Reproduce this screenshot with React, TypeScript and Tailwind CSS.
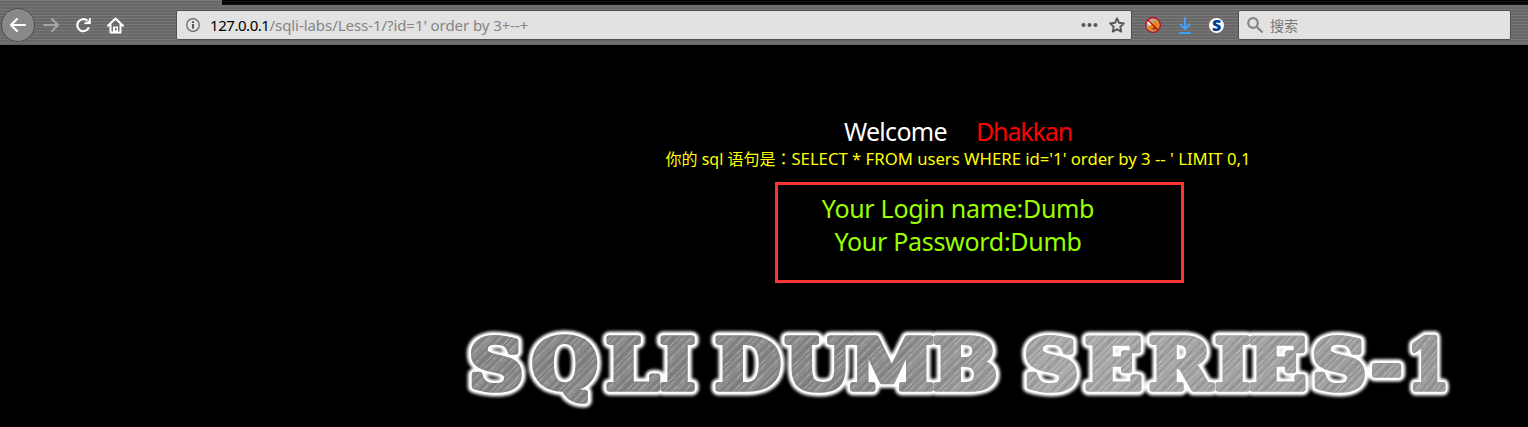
const words: { word: string; left: number[]; stretch: number }[] = [
  { word: "SQLI", left: [469, 532, 606, 660], stretch: 1.09 },
  { word: "DUMB", left: [715, 785, 850, 933], stretch: 1.1 },
  { word: "SERIES-", left: [1024, 1085, 1149, 1215, 1249, 1312, 1371], stretch: 1.09 },
  { word: "1", left: [1407], stretch: 0.88 },
];

const grain = [0.1, 0.2, 0.04, 0.12, 0.2, 0.08, 0.02, 0.3, 0.12, 0.16, 0.05, 0.1, 0.16, 0.04, 0.03, 0.24, 0.1, 0.06, 0.18, 0.02, 0.06, 0.2, 0.02];

function Words({ paint, width }: { paint: string; width: number }) {
  return (
    <g fill={paint} stroke={paint} strokeWidth={width} strokeLinejoin="round">
      {words.map((w) => (
        <text key={w.word} x={w.left.map((v) => v / w.stretch).join(" ")} y="389.5" transform={`scale(${w.stretch} 1)`}>{w.word}</text>
      ))}
    </g>
  );
}

function Banner() {
  return (
    <svg className="block w-full h-[124px]" viewBox="0 303 1528 124" fontFamily="DejaVu Serif, serif" fontWeight="700" fontSize="69">
      <defs>
        <linearGradient id="metal" gradientUnits="userSpaceOnUse" x1="430" y1="330" x2="1330" y2="430">
          <stop offset="0" stopColor="#828282" />
          <stop offset="0.38" stopColor="#838383" />
          <stop offset="0.6" stopColor="#a8a8a8" />
          <stop offset="1" stopColor="#969696" />
        </linearGradient>
        <pattern id="grain" width="23" height="23" patternUnits="userSpaceOnUse" patternTransform="rotate(42)">
          {grain.map((g, i) => (
            <rect key={i} x={i} width="1" height="23" fill={i % 2 ? "#fff" : "#333"} opacity={g} />
          ))}
        </pattern>
        <filter id="glow" x="-5%" y="-30%" width="110%" height="160%">
          <feGaussianBlur stdDeviation="1.7" />
        </filter>
      </defs>
      <g filter="url(#glow)"><Words paint="#fff" width={13} /></g>
      <Words paint="#fff" width={9} />
      <Words paint="url(#metal)" width={5.6} />
      <Words paint="url(#grain)" width={5.6} />
    </svg>
  );
}

function Toolbar() {
  return (
    <header className="h-[46px] flex flex-col bg-[#686868] bg-[repeating-linear-gradient(180deg,#777_0px,#777_1px,#686868_1px,#686868_3px)] border-b border-black">
      <div className="h-[5px] ml-[222px] shrink-0 bg-[repeating-linear-gradient(180deg,#000_0px,#000_1px,#181818_1px,#181818_2px,#000_2px,#000_3px)]" />
      <div className="flex items-center h-[40px] pl-[1px] pr-[17px] text-white">
        <div className="size-[34px] rounded-full border border-[#4e4e4e] bg-[#898989] flex items-center justify-center">
          <svg width="18" height="16" viewBox="0 0 18 16" fill="none" stroke="#fff" strokeWidth="2.2" strokeLinecap="round" strokeLinejoin="round"><path d="M8 2 2 8l6 6M2 8h14" /></svg>
        </div>
        <svg className="ml-[7px]" width="18" height="16" viewBox="0 0 18 16" fill="none" stroke="#a6a6a6" strokeWidth="2.2" strokeLinecap="round" strokeLinejoin="round"><path d="m10 2 6 6-6 6M16 8H2" /></svg>
        <svg className="ml-[15px]" width="17" height="16" viewBox="0 0 17 16" fill="none" stroke="#fff" strokeWidth="2.2"><path d="M13.9 10.4A6 6 0 1 1 12.4 3.8" /><path d="M15.8 1v6H9.5V5.300h2.200L14 3V1Z" fill="#fff" stroke="none" /></svg>
        <svg className="ml-[15px]" width="17" height="17" viewBox="0 0 17 17"><path d="M1 8.8 8.5 1.5 16 8.800M3.500 8v7.500h10V8" fill="none" stroke="#fff" strokeWidth="2" strokeLinecap="round" strokeLinejoin="round" /><path d="M6 15V9.500h5V15Z" fill="#fff" /><path d="M8 11h1.500v2.500H8Z" fill="#686868" /></svg>
        <div className="ml-[52px] w-[956px] h-[30px] flex items-center bg-[#e2e2e2] border border-[#505050] rounded-[2px] pl-[9px] pr-[6px]">
          <svg width="14" height="14" viewBox="0 0 14 14"><circle cx="7" cy="7" r="6.3" fill="none" stroke="#666" strokeWidth="1.2" /><path d="M6 6h2v4.5H6zM6 3.2h2v1.8H6z" fill="#555" /></svg>
          <div className="ml-[10px] flex-1 whitespace-pre font-['Noto_Sans',sans-serif] text-[15px] leading-5 tracking-[-0.06px] text-[#858585]"><span className="text-black tracking-[-0.45px]">127.0.0.1</span>/sqli-labs/Less-1/?id=1' order by 3+--+</div>
          <svg width="17" height="6" viewBox="0 0 17 6" fill="#555"><circle cx="2.500" cy="3" r="2" /><circle cx="8.500" cy="3" r="2" /><circle cx="14.500" cy="3" r="2" /></svg>
          <svg className="ml-[11px]" width="16" height="16" viewBox="0 0 16 16"><path d="m8 1.300 2 4.500 4.900.6-3.600 3.300.9 4.900L8 12.200l-4.200 2.400.9-4.900L1.100 6.400 6 5.800Z" fill="none" stroke="#555" strokeWidth="1.900" strokeLinejoin="round" /></svg>
        </div>
        <svg className="ml-[12px]" width="18" height="18" viewBox="0 0 18 18"><circle cx="9" cy="9" r="7" fill="#b9a9a0" /><path d="M5 9 9 8l1-4 3 1 2 3-1 5-4 2-4-1-2-2Z" fill="#e98610" /><path d="m3 7 2-3 3 3-2 3Z" fill="#eee" /><path d="m7 13 3-2 2 1-1 2Z" fill="#8f4a12" /><circle cx="9" cy="9" r="7.300" fill="none" stroke="#c8000c" strokeWidth="1.200" /><path d="m4 4 10 10" stroke="#c8000c" strokeWidth="1.300" /></svg>
        <svg className="ml-[16px]" width="14" height="17" viewBox="0 0 14 17" fill="none" stroke="#3f9fff" strokeWidth="2" strokeLinecap="round" strokeLinejoin="round"><path d="M7 1v11M2.500 7.500 7 12l4.500-4.500M2 16h10" /></svg>
        <div className="ml-[17px] size-[15px] rounded-full bg-white flex items-center justify-center text-[#003b94] text-[16px] leading-none font-black font-['Noto_Sans',sans-serif]">S</div>
        <div className="ml-auto w-[273px] h-[30px] bg-[#e2e2e2] border border-[#505050] rounded-[2px] flex items-center pl-[8px]">
          <svg width="16" height="16" viewBox="0 0 16 16" fill="none" stroke="#858585" strokeWidth="2.200"><circle cx="6" cy="6" r="4.800" /><path d="m9.500 9.500 6 6" /></svg>
          <span className="ml-[7px] text-[14px] text-[#777] font-['Noto_Sans_CJK_SC',sans-serif]">搜索</span>
        </div>
      </div>
    </header>
  );
}

export default function App() {
  return (
    <div className="h-[427px] w-[1528px] overflow-hidden bg-black flex flex-col font-['Noto_Sans','Noto_Sans_CJK_SC',sans-serif]">
      <Toolbar />
      <main className="flex flex-col h-[257px] pl-[388px] items-center whitespace-pre">
        <div className="mt-[69px] h-[33px] leading-[33px] text-[25px] flex gap-[29px]">
          <span className="text-white tracking-[-0.7px]">Welcome</span>
          <span className="text-[#f00] tracking-[-1.1px]">Dhakkan</span>
        </div>
        <div className="h-[22px] leading-[21px] text-[16px] text-[#ff0]">你的 sql 语句是<span className="font-['Noto_Sans_CJK_TC',sans-serif]" lang="zh-TW">：</span><span className="text-[16.7px]">SELECT * FROM users WHERE id='1' order by 3 -- ' LIMIT 0,1</span></div>
        <div className="mt-[12px] ml-[43px] w-[409px] h-[101px] border-[3px] border-[#ff3333] pt-[7px] pr-[43px] text-center text-[25px] leading-[33px] tracking-[-0.3px] text-[#9f0]">
          <div>Your Login name:Dumb</div>
          <div>Your Password:Dumb</div>
        </div>
      </main>
      <Banner />
    </div>
  );
}
